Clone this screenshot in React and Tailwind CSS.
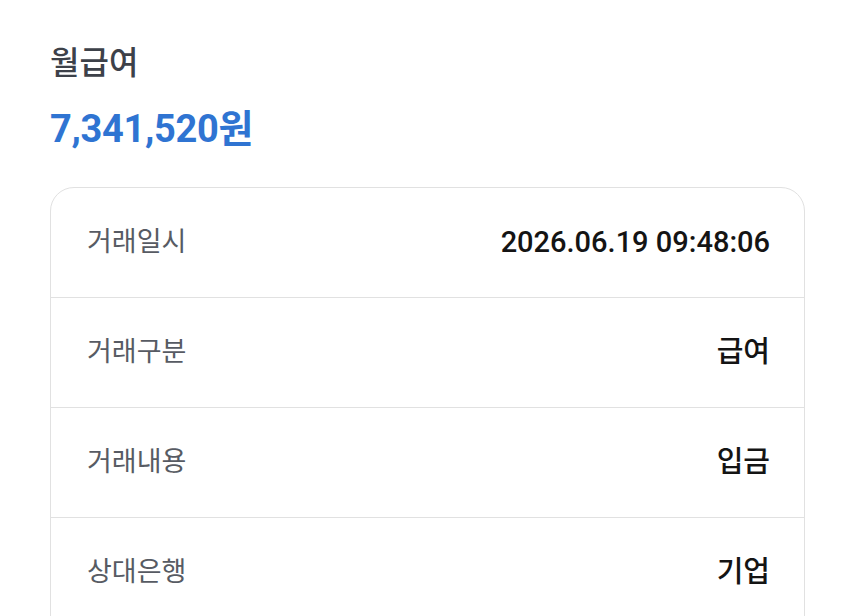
import React from 'react';

const rows = [
  { label: '거래일시', value: '2026.06.19 09:48:06' },
  { label: '거래구분', value: '급여' },
  { label: '거래내용', value: '입금' },
  { label: '상대은행', value: '기업' },
];

export default function App() {
  return (
    <div
      className="w-[850px] h-[616px] overflow-hidden bg-white pl-[50px] pr-[45px] pt-[40px]"
      style={{ fontFamily: 'Roboto, "Noto Sans CJK KR", sans-serif' }}
    >
      {/* 제목 */}
      <h1 className="text-[32px] leading-[46px] font-medium text-[#3d4149]">월급여</h1>
      <div className="mt-[20px] text-[38px] leading-[46px] font-bold text-[#2f74d2] tracking-[-0.3px]">
        7,341,520원
      </div>

      {/* 거래 상세 - 아래로 계속 이어지는 카드 */}
      <div className="mt-[35px] rounded-t-[24px] border border-[#e1e1e1] bg-white">
        {rows.map((row, i) => (
          <div
            key={row.label}
            className={`flex items-center justify-between pl-[36px] pr-[34px] ${
              i > 0 ? 'h-[110px] border-t border-[#e1e1e1]' : 'h-[109px]'
            }`}
          >
            <span className="text-[27px] text-[#575b63]">{row.label}</span>
            <span className="text-[29px] font-medium text-[#141414]">{row.value}</span>
          </div>
        ))}
      </div>
    </div>
  );
}
